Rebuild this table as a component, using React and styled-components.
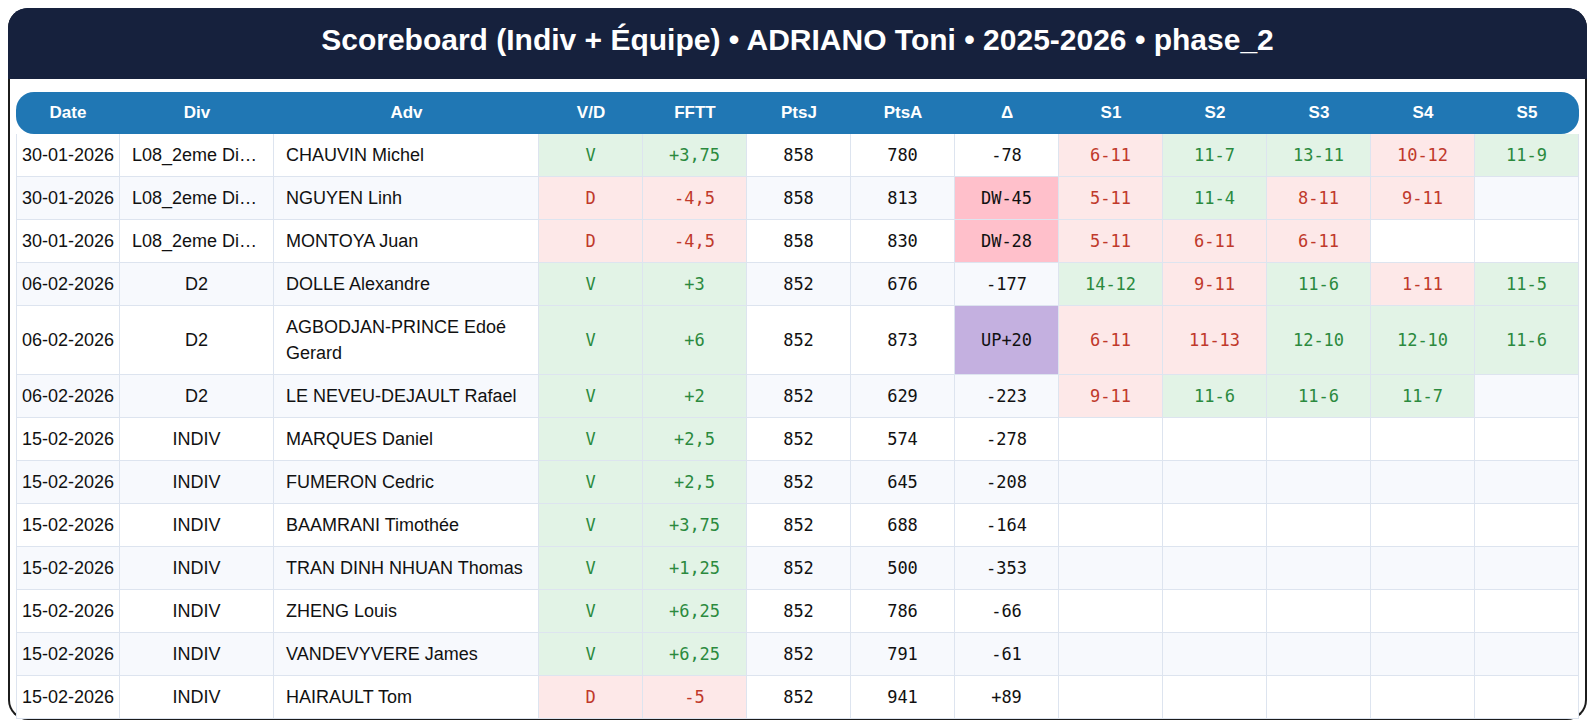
import React from "react";
import styled, { createGlobalStyle, css } from "styled-components";

const COLS = "104px 154px 265px repeat(10, 104px)";

const rows = [
  { date: "30-01-2026", div: "L08_2eme Division", adv: "CHAUVIN Michel", vd: "V", fftt: "+3,75", ptsJ: "858", ptsA: "780", delta: "-78", sets: ["6-11", "11-7", "13-11", "10-12", "11-9"] },
  { date: "30-01-2026", div: "L08_2eme Division", adv: "NGUYEN Linh", vd: "D", fftt: "-4,5", ptsJ: "858", ptsA: "813", delta: "DW-45", deltaTone: "dw", sets: ["5-11", "11-4", "8-11", "9-11", ""] },
  { date: "30-01-2026", div: "L08_2eme Division", adv: "MONTOYA Juan", vd: "D", fftt: "-4,5", ptsJ: "858", ptsA: "830", delta: "DW-28", deltaTone: "dw", sets: ["5-11", "6-11", "6-11", "", ""] },
  { date: "06-02-2026", div: "D2", adv: "DOLLE Alexandre", vd: "V", fftt: "+3", ptsJ: "852", ptsA: "676", delta: "-177", sets: ["14-12", "9-11", "11-6", "1-11", "11-5"] },
  { date: "06-02-2026", div: "D2", adv: "AGBODJAN-PRINCE Edoé Gerard", vd: "V", fftt: "+6", ptsJ: "852", ptsA: "873", delta: "UP+20", deltaTone: "up", sets: ["6-11", "11-13", "12-10", "12-10", "11-6"] },
  { date: "06-02-2026", div: "D2", adv: "LE NEVEU-DEJAULT Rafael", vd: "V", fftt: "+2", ptsJ: "852", ptsA: "629", delta: "-223", sets: ["9-11", "11-6", "11-6", "11-7", ""] },
  { date: "15-02-2026", div: "INDIV", adv: "MARQUES Daniel", vd: "V", fftt: "+2,5", ptsJ: "852", ptsA: "574", delta: "-278", sets: ["", "", "", "", ""] },
  { date: "15-02-2026", div: "INDIV", adv: "FUMERON Cedric", vd: "V", fftt: "+2,5", ptsJ: "852", ptsA: "645", delta: "-208", sets: ["", "", "", "", ""] },
  { date: "15-02-2026", div: "INDIV", adv: "BAAMRANI Timothée", vd: "V", fftt: "+3,75", ptsJ: "852", ptsA: "688", delta: "-164", sets: ["", "", "", "", ""] },
  { date: "15-02-2026", div: "INDIV", adv: "TRAN DINH NHUAN Thomas", vd: "V", fftt: "+1,25", ptsJ: "852", ptsA: "500", delta: "-353", sets: ["", "", "", "", ""] },
  { date: "15-02-2026", div: "INDIV", adv: "ZHENG Louis", vd: "V", fftt: "+6,25", ptsJ: "852", ptsA: "786", delta: "-66", sets: ["", "", "", "", ""] },
  { date: "15-02-2026", div: "INDIV", adv: "VANDEVYVERE James", vd: "V", fftt: "+6,25", ptsJ: "852", ptsA: "791", delta: "-61", sets: ["", "", "", "", ""] },
  { date: "15-02-2026", div: "INDIV", adv: "HAIRAULT Tom", vd: "D", fftt: "-5", ptsJ: "852", ptsA: "941", delta: "+89", sets: ["", "", "", "", ""] },
];

const headers = ["Date", "Div", "Adv", "V/D", "FFTT", "PtsJ", "PtsA", "Δ", "S1", "S2", "S3", "S4", "S5"];

// set score -> win / loss from the player's side
const setTone = (s) => {
  if (!s) return undefined;
  const [a, b] = s.split("-").map(Number);
  return a > b ? "win" : "loss";
};

export default function App() {
  return (
    <>
      <GlobalStyle />
      <Board>
        <TitleBar>
          <Title>Scoreboard (Indiv + Équipe) • ADRIANO Toni • 2025-2026 • phase_2</Title>
        </TitleBar>
        <Content>
          <HeadRow>
            {headers.map((h) => (
              <HeadCell key={h}>{h}</HeadCell>
            ))}
          </HeadRow>
          {rows.map((r, i) => {
            const tone = r.vd === "V" ? "win" : "loss";
            return (
              <Row key={i} $stripe={i % 2 === 1}>
                <Cell $first $nowrap $align="center" $pad="0 2px">{r.date}</Cell>
                <Cell $align="center" $pad="0 12px">
                  <Truncate>{r.div}</Truncate>
                </Cell>
                <Cell $pad="0 6px 0 12px">{r.adv}</Cell>
                <Cell $mono $align="center" $tone={tone}>{r.vd}</Cell>
                <Cell $mono $align="center" $tone={tone}>{r.fftt}</Cell>
                <Cell $mono $align="center">{r.ptsJ}</Cell>
                <Cell $mono $align="center">{r.ptsA}</Cell>
                <Cell $mono $align="center" $tone={r.deltaTone}>{r.delta}</Cell>
                {r.sets.map((s, k) => (
                  <Cell key={k} $mono $align="center" $tone={setTone(s)}>{s}</Cell>
                ))}
              </Row>
            );
          })}
        </Content>
      </Board>
    </>
  );
}

const GlobalStyle = createGlobalStyle`
  html, body { background: #ffffff; }
  body {
    margin: 8px;
    font-family: "Liberation Sans", Arial, sans-serif;
    color: #111;
  }
  * { box-sizing: border-box; }
`;

const Board = styled.div`
  height: calc(100vh - 16px);
  border: 2px solid #1c1c1c;
  border-top-color: #16213d;
  border-radius: 20px;
  background: #ffffff;
`;

const TitleBar = styled.div`
  height: 71px;
  margin: -2px -2px 0;
  padding-bottom: 8px;
  background: #16213d;
  border-radius: 20px 20px 0 0;
  display: flex;
  align-items: center;
  justify-content: center;
`;

const Title = styled.h1`
  margin: 0;
  color: #ffffff;
  font-size: 30px;
  font-weight: 700;
  line-height: 1;
`;

const Content = styled.div`
  padding: 13px 6px 0;
`;

const HeadRow = styled.div`
  display: grid;
  grid-template-columns: ${COLS};
  height: 42px;
  background: #2077b4;
  border-radius: 18px;
`;

const HeadCell = styled.div`
  display: flex;
  align-items: center;
  justify-content: center;
  color: #ffffff;
  font-size: 17px;
  font-weight: 700;
`;

const Row = styled.div`
  display: grid;
  grid-template-columns: ${COLS};
  background: ${(p) => (p.$stripe ? "#f7f9fd" : "#ffffff")};
`;

const tones = {
  win: css`
    background: #e2f3e6;
    color: #2b8a3e;
  `,
  loss: css`
    background: #fde8e8;
    color: #c0392b;
  `,
  dw: css`
    background: #ffc0cb;
    color: #111;
  `,
  up: css`
    background: #c4b0e0;
    color: #111;
  `,
};

const Cell = styled.div`
  display: flex;
  align-items: center;
  justify-content: ${(p) => (p.$align === "center" ? "center" : "flex-start")};
  min-width: 0;
  min-height: 43px;
  padding: ${(p) => p.$pad || "0 6px"};
  padding-top: 8px;
  padding-bottom: 8px;
  border-right: 1px solid #dde4ef;
  border-bottom: 1px solid #dde4ef;
  border-left: ${(p) => (p.$first ? "1px solid #dde4ef" : "none")};
  white-space: ${(p) => (p.$nowrap ? "nowrap" : "normal")};
  font-family: ${(p) => (p.$mono ? '"DejaVu Sans Mono", monospace' : '"Liberation Sans", Arial, sans-serif')};
  font-size: ${(p) => (p.$mono ? "17px" : "18px")};
  line-height: 26px;
  color: #111;
  ${(p) => p.$tone && tones[p.$tone]}
`;

const Truncate = styled.span`
  display: block;
  min-width: 0;
  white-space: nowrap;
  overflow: hidden;
  text-overflow: ellipsis;
`;
